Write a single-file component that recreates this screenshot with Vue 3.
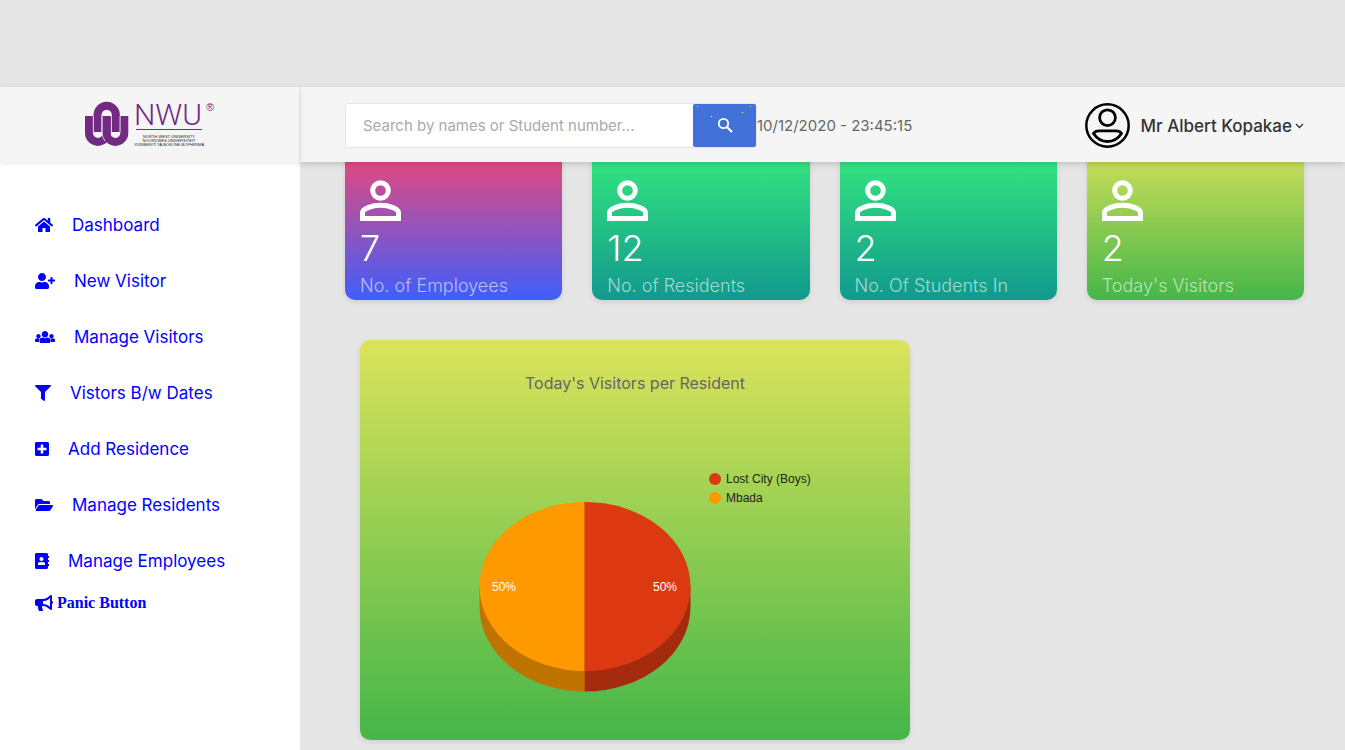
<script setup>
import { ref } from 'vue'

const query = ref('')

const menu = [
  {
    label: 'Dashboard',
    width: 576,
    path: 'M280.37 148.26L96 300.11V464a16 16 0 0 0 16 16l112.06-.29a16 16 0 0 0 15.92-16V368a16 16 0 0 1 16-16h64a16 16 0 0 1 16 16v95.64a16 16 0 0 0 16 16.05L464 480a16 16 0 0 0 16-16V300L295.67 148.26a12.19 12.19 0 0 0-15.3 0zM571.6 251.47L488 182.56V44.05a12 12 0 0 0-12-12h-56a12 12 0 0 0-12 12v72.61L318.47 43a48 48 0 0 0-61 0L4.34 251.47a12 12 0 0 0-1.6 16.9l25.5 31A12 12 0 0 0 45.15 301l235.22-193.74a12.19 12.19 0 0 1 15.3 0L530.9 301a12 12 0 0 0 16.9-1.6l25.5-31a12 12 0 0 0-1.7-16.93z',
  },
  {
    label: 'New Visitor',
    width: 640,
    path: 'M624 208h-64v-64c0-8.8-7.2-16-16-16h-32c-8.8 0-16 7.2-16 16v64h-64c-8.8 0-16 7.2-16 16v32c0 8.8 7.2 16 16 16h64v64c0 8.8 7.2 16 16 16h32c8.8 0 16-7.2 16-16v-64h64c8.8 0 16-7.2 16-16v-32c0-8.8-7.2-16-16-16zm-400 48c70.7 0 128-57.3 128-128S294.7 0 224 0 96 57.3 96 128s57.3 128 128 128zm89.6 32h-16.7c-22.2 10.2-46.9 16-72.9 16s-50.6-5.8-72.9-16h-16.7C60.2 288 0 348.2 0 422.4V464c0 26.5 21.5 48 48 48h352c26.5 0 48-21.5 48-48v-41.6c0-74.2-60.2-134.4-134.4-134.4z',
  },
  {
    label: 'Manage Visitors',
    width: 640,
    path: 'M320 64c57.99 0 105 47.01 105 105s-47.01 105-105 105-105-47.01-105-105S262.01 64 320 64zm113.463 217.366l-39.982-9.996c-49.168 35.365-108.766 27.473-146.961 0l-39.982 9.996C174.485 289.379 152 318.177 152 351.216V412c0 19.882 16.118 36 36 36h264c19.882 0 36-16.118 36-36v-60.784c0-33.039-22.485-61.837-54.537-69.85zM528 300c38.66 0 70-31.34 70-70s-31.34-70-70-70-70 31.34-70 70 31.34 70 70 70zm-416 0c38.66 0 70-31.34 70-70s-31.34-70-70-70-70 31.34-70 70 31.34 70 70 70zm24 112v-60.784c0-16.551 4.593-32.204 12.703-45.599-29.988 14.72-63.336 8.708-85.69-7.37l-26.655 6.664C14.99 310.252 0 329.452 0 351.477V392c0 13.255 10.745 24 24 24h112.169a52.417 52.417 0 0 1-.169-4zm467.642-107.09l-26.655-6.664c-27.925 20.086-60.89 19.233-85.786 7.218C499.369 318.893 504 334.601 504 351.216V412c0 1.347-.068 2.678-.169 4H616c13.255 0 24-10.745 24-24v-40.523c0-22.025-14.99-41.225-36.358-46.567z',
  },
  {
    label: 'Vistors B/w Dates',
    width: 512,
    path: 'M487.976 0H24.028C2.71 0-8.047 25.866 7.058 40.971L192 225.941V432c0 7.831 3.821 15.17 10.237 19.662l80 55.98C298.02 518.69 320 507.493 320 487.98V225.941l184.947-184.97C520.021 25.896 509.338 0 487.976 0z',
  },
  {
    label: 'Add Residence',
    width: 448,
    path: 'M400 32H48C21.5 32 0 53.5 0 80v352c0 26.5 21.5 48 48 48h352c26.5 0 48-21.5 48-48V80c0-26.5-21.5-48-48-48zm-32 252c0 6.6-5.4 12-12 12h-92v92c0 6.6-5.4 12-12 12h-56c-6.6 0-12-5.4-12-12v-92H92c-6.6 0-12-5.4-12-12v-56c0-6.6 5.4-12 12-12h92v-92c0-6.6 5.4-12 12-12h56c6.6 0 12 5.4 12 12v92h92c6.6 0 12 5.4 12 12v56z',
  },
  {
    label: 'Manage Residents',
    width: 576,
    path: 'M572.694 292.093L500.27 416.248A63.997 63.997 0 0 1 444.989 448H45.025c-18.523 0-30.064-20.093-20.731-36.093l72.424-124.155A64 64 0 0 1 152 256h399.964c18.523 0 30.064 20.093 20.73 36.093zM152 224h328v-48c0-26.51-21.49-48-48-48H272l-64-64H48C21.49 64 0 85.49 0 112v278.046l69.077-118.418C86.214 242.25 117.989 224 152 224z',
  },
  {
    label: 'Manage Employees',
    width: 448,
    path: 'M436 160c6.6 0 12-5.4 12-12v-40c0-6.6-5.4-12-12-12h-20V48c0-26.5-21.5-48-48-48H48C21.5 0 0 21.5 0 48v416c0 26.5 21.5 48 48 48h320c26.5 0 48-21.5 48-48v-48h20c6.6 0 12-5.4 12-12v-40c0-6.6-5.4-12-12-12h-20v-64h20c6.6 0 12-5.4 12-12v-40c0-6.6-5.4-12-12-12h-20v-64h20zm-228-32c35.3 0 64 28.7 64 64s-28.7 64-64 64-64-28.7-64-64 28.7-64 64-64zm112 236.8c0 10.6-10 19.2-22.4 19.2H118.4C106 384 96 375.4 96 364.8v-19.2c0-31.8 30.1-57.6 67.2-57.6h5c12.3 5.1 25.7 8 39.8 8s27.6-2.9 39.8-8h5c37.1 0 67.2 25.8 67.2 57.6v19.2z',
  },
]

const cards = [
  { tone: 'pink', value: 7, label: 'No. of Employees' },
  { tone: 'teal', value: 12, label: 'No. of Residents' },
  { tone: 'teal', value: 2, label: 'No. Of Students In' },
  { tone: 'lime', value: 2, label: "Today's Visitors" },
]
</script>

<template>
  <div class="page">
    <div class="brand">
      <a href="#" aria-label="NWU home">
        <svg class="logo" width="132" height="51" viewBox="84 99 132 51">
          <g fill="none" stroke="#722a82" stroke-width="8">
            <path d="M97.5 132V115a9.2 9.2 0 0 1 18.4 0v17" />
            <path d="M89 116v17a8.9 8.9 0 0 0 17.8 0V116" />
            <path d="M106.5 116v17a8.9 8.9 0 0 0 17.8 0V116" />
          </g>
          <g fill="none" stroke="#d9c6de" stroke-width="1">
            <path d="M102 132V116M111.500 132V116" />
            <path d="M93.300 116v16M120 116v16M102 132q0 5 3 9" />
          </g>
          <text class="logo-name" x="134" y="125">NWU</text>
          <path d="M136 129.5h66" stroke="#722a82" stroke-width="1" />
          <text class="logo-mark" x="206" y="111">®</text>
          <g class="logo-small">
            <text x="169" y="138">NORTH-WEST UNIVERSITY</text>
            <text x="169" y="142">NOORDWES-UNIVERSITEIT</text>
            <text x="169" y="146">YUNIBESITI YA BOKONE-BOPHIRIMA</text>
          </g>
        </svg>
      </a>
    </div>

    <header class="topbar">
      <form class="search" @submit.prevent>
        <input v-model="query" type="text" aria-label="Search" placeholder="Search by names or Student number..." />
        <button type="submit" aria-label="Search">
          <svg width="63" height="43" viewBox="0 0 63 43">
            <circle cx="30.500" cy="19.500" r="4.700" fill="none" stroke="#fff" stroke-width="1.800" />
            <path d="M34 23l5 5" stroke="#fff" stroke-width="2.200" />
            <path d="M4 2h1v1H4zM18 12h1v1h-1zM49 8h1v1h-1zM57 2h1v1h-1z" fill="#fff" />
          </svg>
        </button>
      </form>
      <time class="clock" datetime="2020-12-10T23:45:15">10/12/2020 - 23:45:15</time>
      <button class="account" type="button">
        <svg width="45" height="45" viewBox="0 0 45 45" fill="none" stroke="#000">
          <circle cx="22.500" cy="22.500" r="21.200" stroke-width="2.500" />
          <circle cx="22.500" cy="14.700" r="7.900" stroke-width="2.800" />
          <path d="M14 27.800h17q4 0 5.500 2.700C33 35.800 28 38.500 22.500 38.500S12 35.800 8.500 30.500Q10 27.800 14 27.800z" stroke-width="2.800" />
        </svg>
        <span>Mr Albert Kopakae</span>
        <svg class="chevron" width="9" height="6" viewBox="0 0 9 6">
          <path d="M1 1l3.500 3.500L8 1" fill="none" stroke="#333" stroke-width="1.300" />
        </svg>
      </button>
    </header>

    <nav class="sidebar">
      <a v-for="item in menu" :key="item.label" class="item" href="#">
        <svg height="16" :width="item.width / 32" :viewBox="`0 0 ${item.width} 512`">
          <path :d="item.path" fill="currentColor" />
        </svg>
        {{ item.label }}
      </a>
      <a class="panic" href="#">
        <svg width="18" height="16" viewBox="0 0 576 512">
          <path fill="currentColor" d="M576 240c0-23.63-12.95-44.04-32-55.12V32.01C544 23.26 537.02 0 512 0c-7.12 0-14.19 2.38-19.98 7.02l-85.03 68.03C364.28 109.19 310.66 128 256 128H64c-35.35 0-64 28.65-64 64v96c0 35.35 28.65 64 64 64h33.7c-1.39 10.48-2.18 21.14-2.18 32 0 39.77 9.26 77.35 25.56 110.94 5.19 10.69 16.52 17.06 28.4 17.06h74.28c26.05 0 41.69-29.84 25.9-50.56-16.4-21.52-26.15-48.36-26.15-77.44 0-11.11 1.62-21.79 4.41-32H256c54.66 0 108.28 18.81 150.98 52.95l85.03 68.03a32.023 32.023 0 0 0 19.98 7.02c24.92 0 32-22.78 32-32V295.13C563.05 284.04 576 263.63 576 240zm-96 141.42l-33.05-26.44C392.95 311.78 325.12 288 256 288v-96c69.12 0 136.95-23.78 190.95-66.98L480 98.58v282.84z" />
        </svg>
        Panic Button
      </a>
    </nav>

    <main class="content">
      <section class="cards">
        <article v-for="card in cards" :key="card.label" class="card" :class="card.tone">
          <svg width="41" height="41" viewBox="0 0 41 41" fill="none" stroke="#fff" stroke-width="5">
            <circle cx="20.500" cy="10.500" r="7.800" />
            <path d="M2.500 38.500v-6C2.500 29 11.500 25.300 20.500 25.300S38.500 29 38.500 32.500v6z" />
          </svg>
          <h2>{{ card.value }}</h2>
          <p>{{ card.label }}</p>
        </article>
      </section>

      <section class="chart">
        <h3>Today's Visitors per Resident</h3>
        <svg width="550" height="300" viewBox="0 100 550 300">
          <path d="M119.500 246v21A105.500 84.500 0 0 0 225 351.500V246z" fill="#bf7300" />
          <path d="M330.500 246v21A105.500 84.500 0 0 1 225 351.500V246z" fill="#a52b0e" />
          <path d="M225 162a105.500 84.500 0 0 0 0 169z" fill="#ff9900" />
          <path d="M225 162a105.500 84.500 0 0 1 0 169z" fill="#dc3912" />
          <path d="M224.500 162v189" stroke="#c94a00" stroke-opacity=".6" />
          <text class="percent" x="132" y="251">50%</text>
          <text class="percent" x="293" y="251">50%</text>
          <circle cx="355" cy="139" r="6" fill="#dc3912" />
          <text class="legend" x="366" y="143">Lost City (Boys)</text>
          <circle cx="355" cy="158" r="6" fill="#ff9900" />
          <text class="legend" x="366" y="162">Mbada</text>
        </svg>
      </section>
    </main>
  </div>
</template>

<style>
body {
  margin: 0;
  background: #e5e5e5;
}
</style>

<style scoped>
* {
  box-sizing: border-box;
}

.page {
  display: grid;
  grid-template-columns: 300px 1fr;
  grid-template-rows: 75px 1fr;
  min-height: 100vh;
  padding-top: 87px;
  background: #e5e5e5;
  font-family: Inter, "Open Sans", sans-serif;
  font-size: 16px;
  color: #666;
}

.brand {
  z-index: 3;
  display: flex;
  justify-content: center;
  align-items: center;
  background: #f5f5f5;
  border-right: 1px solid #e0e0e0;
  box-shadow: 0 1px 5px rgba(0, 0, 0, 0.1);
}

.logo {
  display: block;
  overflow: visible;
}

.logo-name {
  font: 300 30px Roboto, sans-serif;
  fill: #722a82;
}

.logo-mark {
  font: 11px "Liberation Sans", sans-serif;
  fill: #722a82;
}

.logo-small {
  font: 4px "Liberation Sans", sans-serif;
  text-anchor: middle;
  fill: #222;
}

.topbar {
  z-index: 2;
  display: flex;
  align-items: center;
  padding: 2px 41px 0 45px;
  background: #f5f5f5;
  box-shadow: 0 2px 6px rgba(0, 0, 0, 0.16);
}

.search {
  display: flex;
  width: 412px;
  height: 45px;
  border: 1px solid #e5e5e5;
  border-radius: 3px;
  background: #fff;
}

.search input {
  flex: 1;
  min-width: 0;
  padding: 0 17px;
  border: 0;
  outline: 0;
  background: none;
  font: 15px Inter, "Open Sans", sans-serif;
  color: #666;
}

.search input::placeholder {
  color: #aaa;
  opacity: 1;
}

.search button {
  width: 63px;
  padding: 0;
  border: 0;
  border-radius: 2px;
  background: #4272d7;
}

.search button svg {
  display: block;
}

.clock {
  white-space: nowrap;
  font-size: 15px;
}

.account {
  display: flex;
  align-items: center;
  margin-left: auto;
  padding: 0;
  border: 0;
  background: none;
  font: 500 17px Inter, "Open Sans", sans-serif;
  color: #333;
  white-space: nowrap;
}

.account span {
  margin-left: 11px;
}

.chevron {
  margin-left: 3px;
}

.sidebar {
  padding: 35px;
  background: #fff;
}

.item {
  display: flex;
  align-items: center;
  gap: 19px;
  height: 56px;
  color: #00f;
  font-size: 17px;
  text-decoration: none;
}

.panic {
  display: flex;
  align-items: center;
  gap: 4px;
  height: 28px;
  color: #00f;
  font: bold 16px "Liberation Serif", serif;
  text-decoration: none;
}

.content {
  padding: 0 41px 10px 45px;
}

.cards {
  display: grid;
  grid-template-columns: repeat(4, 1fr);
  gap: 30px;
  margin-top: -24px;
}

.card {
  height: 162px;
  padding: 42px 15px 0;
  border-radius: 10px;
  box-shadow: 0 2px 5px rgba(0, 0, 0, 0.1);
  color: #fff;
}

.card svg {
  display: block;
}

.card h2 {
  margin: 4px 0 0;
  font-size: 36px;
  font-weight: 300;
  line-height: 46px;
}

.card p {
  margin: 0;
  font-size: 18px;
  font-weight: 300;
  line-height: 29px;
  color: rgba(255, 255, 255, 0.6);
  white-space: nowrap;
}

.pink {
  background: linear-gradient(#fc466b, #3f5efb);
}

.teal {
  background: linear-gradient(#38ef7d, #11998e);
}

.lime {
  background: linear-gradient(#dce35b, #45b649);
}

.chart {
  width: 550px;
  height: 400px;
  margin: 40px 15px 0;
  border-radius: 10px;
  background: linear-gradient(#dce35b, #45b649);
  box-shadow: 0 2px 5px rgba(0, 0, 0, 0.1);
}

.chart h3 {
  margin: 0;
  padding-top: 31px;
  height: 100px;
  font-size: 16px;
  font-weight: 400;
  line-height: 24px;
  text-align: center;
}

.chart svg {
  display: block;
}

.percent {
  font: 12px "Liberation Sans", Arial, sans-serif;
  fill: #fff;
}

.legend {
  font: 12px "Liberation Sans", Arial, sans-serif;
  fill: #222;
}
</style>
